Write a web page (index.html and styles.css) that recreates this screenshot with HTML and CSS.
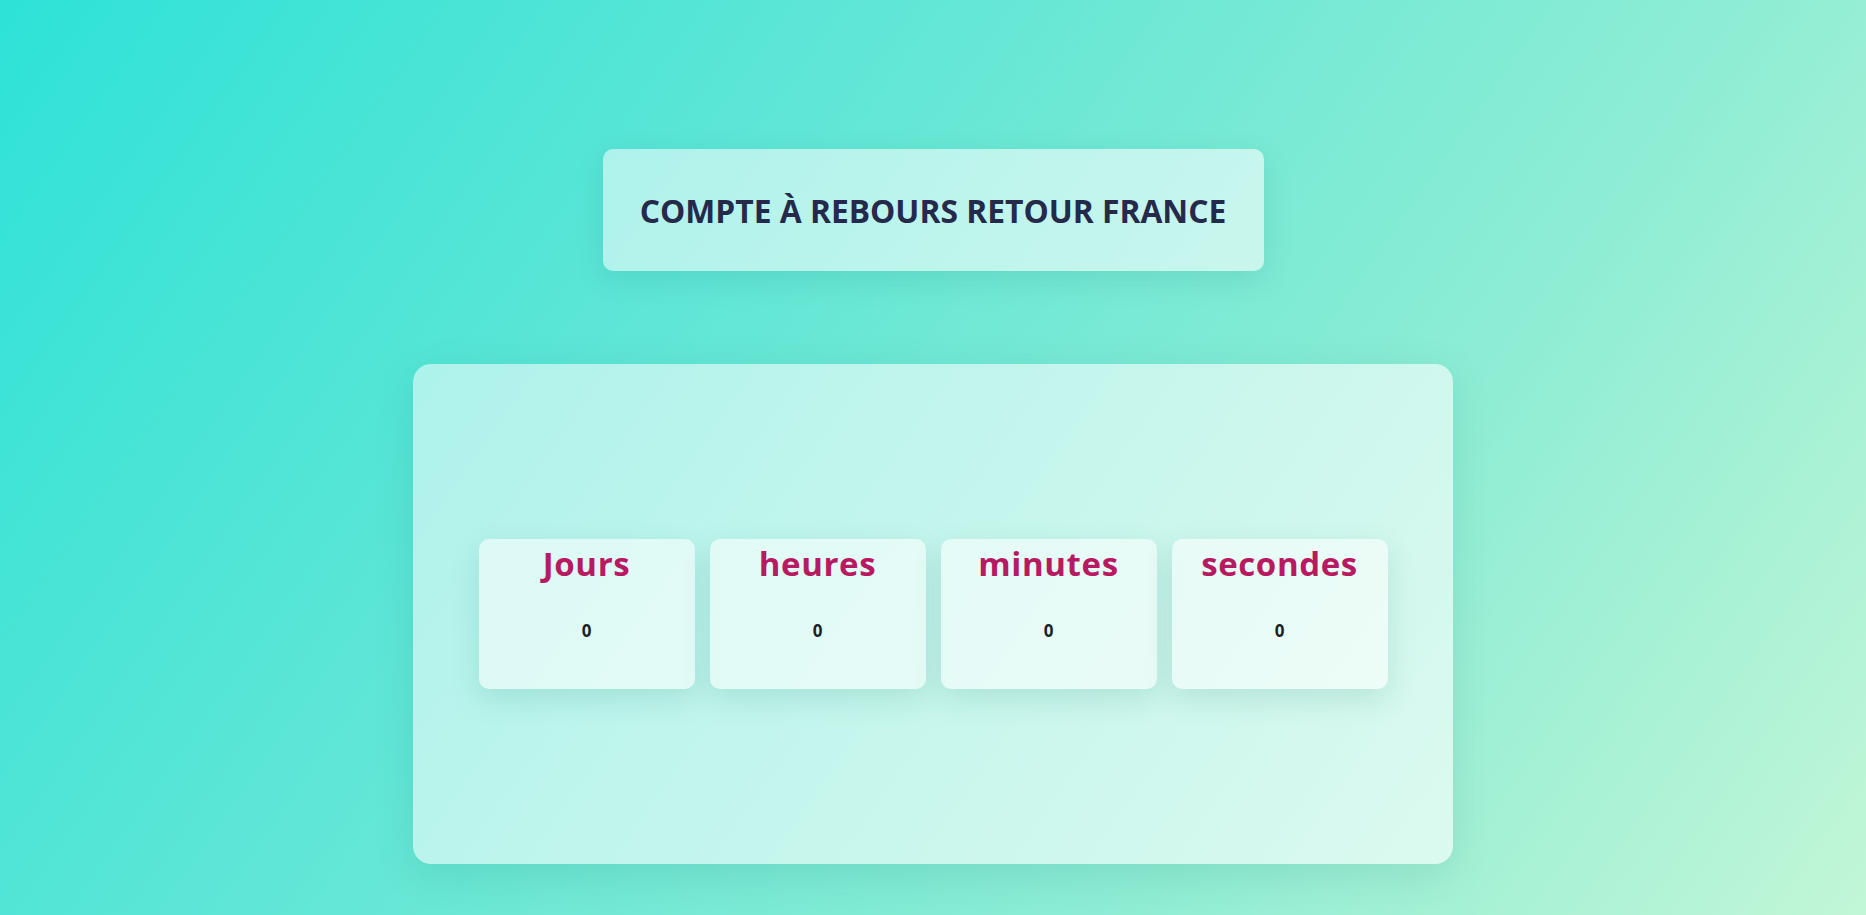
FILE: index.html
```html
<!DOCTYPE html>
<html lang="fr">
<head>
<meta charset="utf-8">
<title>Compte à rebours</title>
<link rel="stylesheet" href="styles.css">
</head>
<body>
<main class="page">
  <header class="title-box">
    <h1 class="title">COMPTE À REBOURS RETOUR FRANCE</h1>
  </header>
  <section class="panel">
    <div class="counters">
      <div class="counter"><h2 class="label">Jours</h2><p class="value">0</p></div>
      <div class="counter"><h2 class="label">heures</h2><p class="value">0</p></div>
      <div class="counter"><h2 class="label">minutes</h2><p class="value">0</p></div>
      <div class="counter"><h2 class="label">secondes</h2><p class="value">0</p></div>
    </div>
  </section>
</main>
</body>
</html>
```
FILE: styles.css
```css
* { box-sizing: border-box; }
html, body { margin: 0; padding: 0; height: 100%; }
body {
  font-family: "Open Sans", "Noto Sans", sans-serif;
  background: linear-gradient(125deg, #2ee2d7 0%, #5fe6d6 35%, #8eedd4 70%, #c2f6d7 100%);
  overflow: hidden;
}
.page {
  display: flex;
  flex-direction: column;
  align-items: center;
  padding-top: 149px;
}
.title-box {
  width: 661px;
  height: 122px;
  display: flex;
  align-items: center;
  justify-content: center;
  border-radius: 10px;
  background: linear-gradient(125deg, rgba(255,255,255,0.52), rgba(255,255,255,0.58));
  box-shadow: 0 8px 30px rgba(0, 90, 80, 0.12);
}
.title {
  margin: 0;
  font-size: 31.8px;
  font-weight: 700;
  color: #252a4a;
  letter-spacing: 0;
}
.panel {
  margin-top: 93px;
  width: 1040px;
  height: 500px;
  border-radius: 18px;
  background: linear-gradient(125deg, rgba(255,255,255,0.52), rgba(255,255,255,0.62));
  box-shadow: 0 10px 40px rgba(0, 90, 80, 0.12);
  display: flex;
  align-items: center;
  justify-content: center;
}
.counters {
  display: flex;
  gap: 15px;
}
.counter {
  width: 216px;
  height: 150px;
  border-radius: 10px;
  background: rgba(255,255,255,0.55);
  box-shadow: 0 10px 30px rgba(0, 110, 95, 0.14);
  display: flex;
  flex-direction: column;
  align-items: center;
  padding-top: 3px;
}
.label {
  margin: 0;
  font-size: 33px;
  font-weight: 700;
  line-height: 44px;
  letter-spacing: 0.6px;
  color: #b81a61;
}
.value {
  margin: 33px 0 0;
  font-size: 17px;
  font-weight: 700;
  color: #1c1f26;
}
```
